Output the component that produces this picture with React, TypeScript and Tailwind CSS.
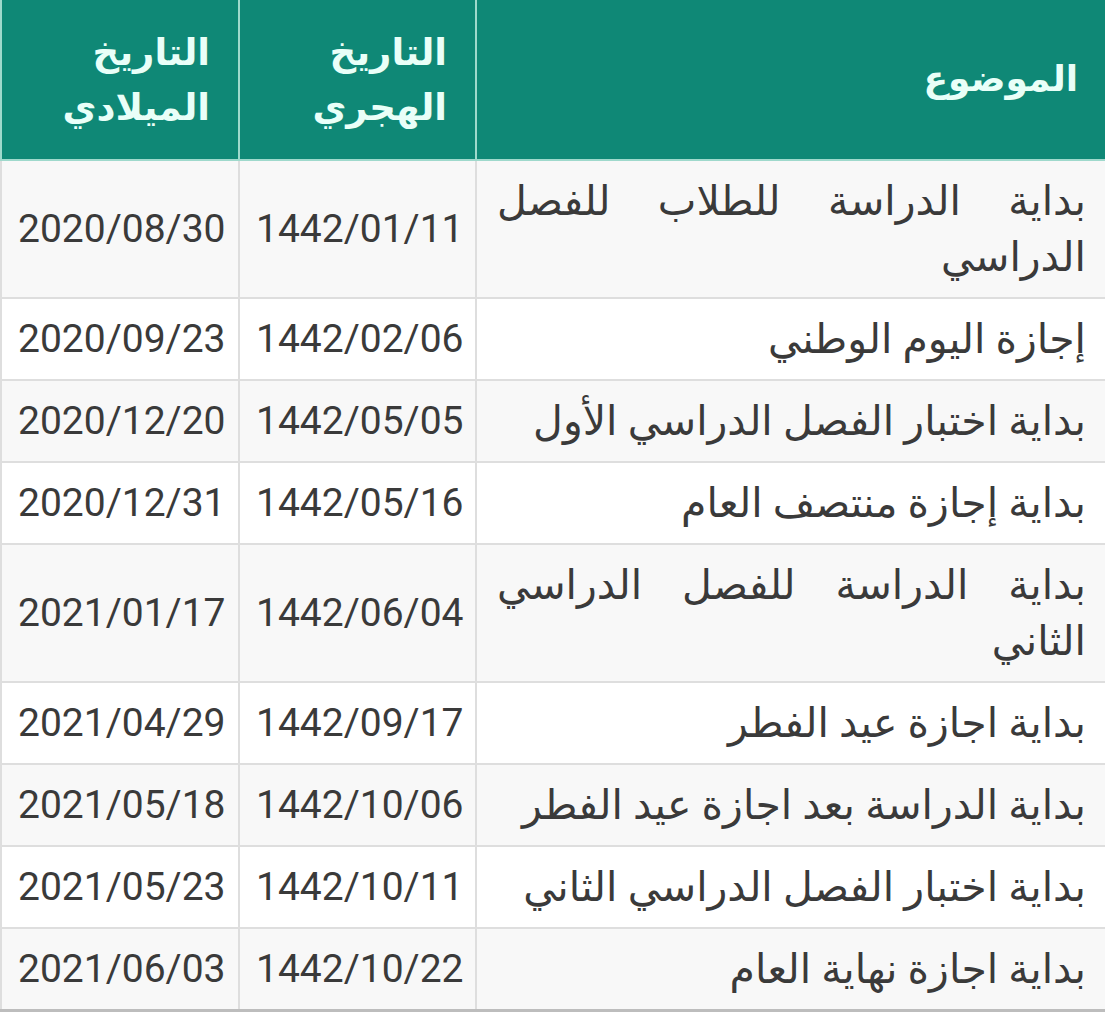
import React from 'react'

type Row = { subject: string; hijri: string; gregorian: string }

const rows: Row[] = [
  { subject: 'بداية الدراسة للطلاب للفصل الدراسي', hijri: '1442/01/11', gregorian: '2020/08/30' },
  { subject: 'إجازة اليوم الوطني', hijri: '1442/02/06', gregorian: '2020/09/23' },
  { subject: 'بداية اختبار الفصل الدراسي الأول', hijri: '1442/05/05', gregorian: '2020/12/20' },
  { subject: 'بداية إجازة منتصف العام', hijri: '1442/05/16', gregorian: '2020/12/31' },
  { subject: 'بداية الدراسة للفصل الدراسي الثاني', hijri: '1442/06/04', gregorian: '2021/01/17' },
  { subject: 'بداية اجازة عيد الفطر', hijri: '1442/09/17', gregorian: '2021/04/29' },
  { subject: 'بداية الدراسة بعد اجازة عيد الفطر', hijri: '1442/10/06', gregorian: '2021/05/18' },
  { subject: 'بداية اختبار الفصل الدراسي الثاني', hijri: '1442/10/11', gregorian: '2021/05/23' },
  { subject: 'بداية اجازة نهاية العام', hijri: '1442/10/22', gregorian: '2021/06/03' },
]

export default function App() {
  return (
    <div className="w-[1105px] bg-white" style={{ fontFamily: 'Roboto, "DejaVu Sans", sans-serif' }}>
      <table dir="rtl" className="w-full table-fixed border-collapse border-b-[3px] border-b-[#bdbdbd] text-[#3a3a3a]">
        <colgroup>
          <col className="w-[630px]" />
          <col className="w-[237px]" />
          <col className="w-[238px]" />
        </colgroup>
        <thead>
          <tr className="bg-[#0f8876] text-[#e9fff8]">
            <th className="h-[160px] border-2 border-[#9fd9cc] border-t-0 border-r-0 px-7 text-right align-middle text-[36px] font-bold leading-[55px]">
              الموضوع
            </th>
            <th className="border-2 border-t-0 border-[#9fd9cc] px-7 text-right align-middle text-[37px] font-bold leading-[55px]">
              التاريخ
              <br />
              الهجري
            </th>
            <th className="border-2 border-t-0 border-[#9fd9cc] px-7 text-right align-middle text-[37px] font-bold leading-[55px]">
              التاريخ
              <br />
              الميلادي
            </th>
          </tr>
        </thead>
        <tbody>
          {rows.map((row, i) => (
            <tr key={row.hijri} className={i % 2 === 0 ? 'bg-[#f8f8f8]' : 'bg-white'}>
              <td className="border-2 border-r-0 border-[#dedede] px-5 py-3 text-justify text-[41px] leading-[56px]">
                {row.subject}
              </td>
              <td className="border-2 border-[#dedede] px-4 py-3 text-center text-[39px] leading-[56px]" dir="ltr">
                {row.hijri}
              </td>
              <td className="border-2 border-[#dedede] px-4 py-3 text-center text-[39px] leading-[56px]" dir="ltr">
                {row.gregorian}
              </td>
            </tr>
          ))}
        </tbody>
      </table>
    </div>
  )
}
